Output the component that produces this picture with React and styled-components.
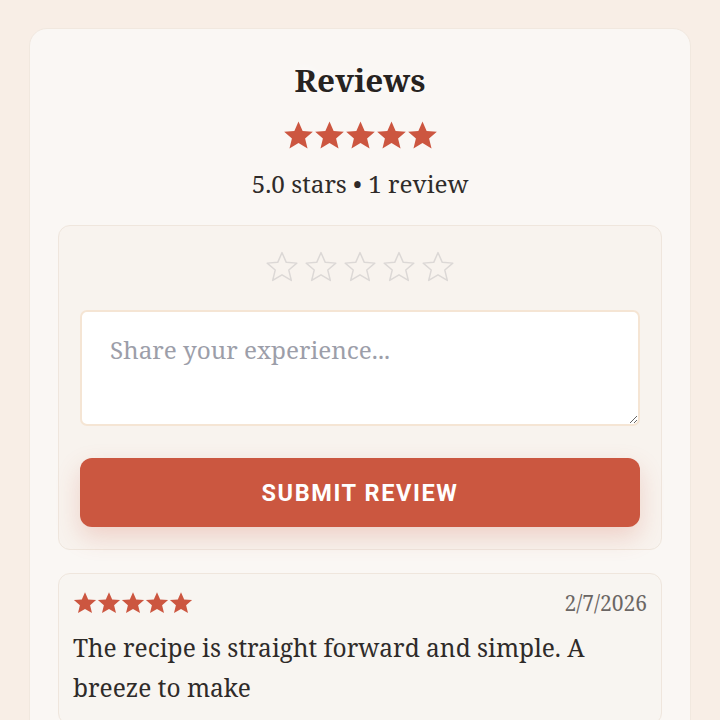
import React from 'react';
import styled, { createGlobalStyle } from 'styled-components';

const GlobalStyle = createGlobalStyle`
  * { box-sizing: border-box; }
  body {
    margin: 0;
    background: #f8eee6;
    font-family: "Noto Serif", "DejaVu Serif", "Liberation Serif", serif;
  }
`;

const Page = styled.div`
  padding: 28px 29px 0;
`;

const Card = styled.section`
  background: #faf7f4;
  border: 1px solid #f1e8df;
  border-radius: 18px;
  padding: 27px 28px 24px;
`;

const Header = styled.div`
  display: flex;
  flex-direction: column;
  align-items: center;
`;

const Title = styled.h2`
  margin: 0;
  font-size: 31.5px;
  line-height: 48px;
  font-weight: 700;
  color: #272321;
  text-shadow: 0 0 14px rgba(255, 255, 255, 0.9);
`;

const Summary = styled.p`
  margin: 17px 0 0;
  font-size: 24.3px;
  line-height: 32px;
  color: #2f2b29;
`;

const StarRow = styled.div`
  display: flex;
  gap: ${p => p.$gap || 0}px;
  color: ${p => (p.$empty ? '#dcd8d6' : '#cc5640')};
  margin-top: ${p => p.$top || 0}px;
  justify-content: ${p => (p.$start ? 'flex-start' : 'center')};
`;

const FormBox = styled.div`
  margin-top: 25px;
  background: #f8f3ee;
  border: 1px solid #efe6dd;
  border-radius: 12px;
  padding: 25px 21px 22px;
  display: flex;
  flex-direction: column;
`;

const TextArea = styled.textarea`
  margin-top: 27px;
  width: 100%;
  height: 116px;
  resize: vertical;
  background: #fff;
  border: 2px solid #f5e5d4;
  border-radius: 7px;
  padding: 20px 28px;
  font-family: inherit;
  font-size: 24.3px;
  line-height: 36px;
  color: #2f2b29;
  outline: none;

  &::placeholder {
    color: #9c9ea9;
  }
`;

const SubmitButton = styled.button`
  margin-top: 32px;
  height: 69px;
  border: none;
  border-radius: 12px;
  background: #cb5740;
  color: #fff;
  font-family: Roboto, "Liberation Sans", sans-serif;
  font-weight: 700;
  font-size: 23.5px;
  letter-spacing: 1.6px;
  text-transform: uppercase;
  box-shadow: 0 10px 24px rgba(203, 87, 64, 0.22);
  cursor: pointer;
`;

const ReviewCard = styled.article`
  margin-top: 23px;
  border: 1px solid #efe6dd;
  border-radius: 12px;
  background: #f8f5f1;
  padding: 15px 14px 16px 14px;
`;

const ReviewTop = styled.div`
  display: flex;
  justify-content: space-between;
  align-items: center;
`;

const ReviewDate = styled.span`
  font-size: 21px;
  color: #6b6664;
`;

const ReviewText = styled.p`
  margin: 11px 0 0;
  font-size: 24.5px;
  line-height: 40px;
  color: #2f2b29;
`;

const StarIcon = ({ size, empty }) => (
  <svg width={size} height={size} viewBox="0 0 24 24">
    <path
      d="M12 1.2l3.2 7.3 7.9.6-6 5.2 1.9 7.8L12 17.9l-7 4.2 1.9-7.8-6-5.2 7.9-.6z"
      fill={empty ? 'none' : 'currentColor'}
      stroke={empty ? 'currentColor' : 'none'}
      strokeWidth={empty ? 1.1 : 0}
      strokeLinejoin="round"
    />
  </svg>
);

const Stars = ({ size, gap, empty, top, start }) => (
  <StarRow $gap={gap} $empty={empty} $top={top} $start={start}>
    {[0, 1, 2, 3, 4].map(i => (
      <StarIcon key={i} size={size} empty={empty} />
    ))}
  </StarRow>
);

export default function App() {
  return (
    <Page>
      <GlobalStyle />
      <Card>
        <Header>
          <Title>Reviews</Title>
          <Stars size={31} gap={0} top={16} />
          <Summary>5.0 stars • 1 review</Summary>
        </Header>

        <FormBox>
          <Stars size={32} gap={7} empty />
          <TextArea placeholder="Share your experience..." />
          <SubmitButton>Submit Review</SubmitButton>
        </FormBox>

        <ReviewCard>
          <ReviewTop>
            <Stars size={24} gap={0} start />
            <ReviewDate>2/7/2026</ReviewDate>
          </ReviewTop>
          <ReviewText>The recipe is straight forward and simple. A breeze to make</ReviewText>
        </ReviewCard>
      </Card>
    </Page>
  );
}
